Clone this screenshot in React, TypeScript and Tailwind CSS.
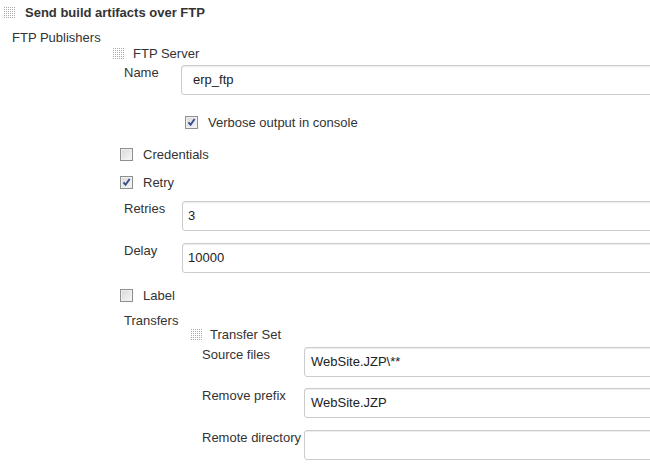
import React from "react";

function Grip() {
  const dots: React.ReactNode[] = [];
  for (let y = 0; y < 11; y += 2) {
    for (let x = 0; x < 11; x += 2) {
      dots.push(<rect key={`${x}-${y}`} x={x} y={y} width="1" height="1" fill="#aaaaaa" />);
    }
  }
  return (
    <svg width="11" height="11" viewBox="0 0 11 11" className="shrink-0">
      {dots}
    </svg>
  );
}

function Checkbox({ checked }: { checked?: boolean }) {
  return (
    <div className="relative h-[13px] w-[13px] shrink-0 border border-[#8e8f8f] bg-gradient-to-br from-[#d8d8d8] to-[#f7f7f7] shadow-[inset_0_0_0_1px_#f0f0f0]">
      {checked && (
        <svg width="11" height="11" viewBox="0 0 11 11" className="absolute left-0 top-0">
          <path d="M2.5 5.3 L4.6 7.8 L8.6 2" stroke="#3a4c8a" strokeWidth="1.9" fill="none" />
        </svg>
      )}
    </div>
  );
}

function CheckRow({ label, checked, className }: { label: string; checked?: boolean; className: string }) {
  return (
    <div className={`flex h-[13px] items-center ${className}`}>
      <Checkbox checked={checked} />
      <span className="ml-[10px] leading-[15px]">{label}</span>
    </div>
  );
}

function Field({
  label,
  value,
  labelWidth,
  pad = "pl-[6px]",
  className,
}: {
  label: string;
  value: string;
  labelWidth: string;
  pad?: string;
  className: string;
}) {
  return (
    <div className={`flex ${className}`}>
      <div className={`${labelWidth} shrink-0 pl-[11px] leading-[15px] whitespace-nowrap`}>{label}</div>
      <div
        className={`flex h-[30px] flex-1 items-center rounded-[3px] border border-[#cccccc] bg-white ${pad} text-[#222] shadow-[inset_0_1px_1px_rgba(0,0,0,0.075)]`}
      >
        {value}
      </div>
    </div>
  );
}

export default function App() {
  return (
    <div
      className="h-[467px] w-[650px] overflow-hidden bg-white text-[13px] text-[#333333]"
      style={{ fontFamily: '"Liberation Sans", Arial, sans-serif' }}
    >
      <div className="w-[700px]">
        <div className="mt-[5px] flex h-[15px] items-center pl-[4px]">
          <Grip />
          <span className="ml-[10px] font-bold leading-[15px]">Send build artifacts over FTP</span>
        </div>

        <div className="mt-[10px] pl-[12px] leading-[15px]">FTP Publishers</div>

        <div className="pl-[113px]">
          <div className="mt-[1px] flex h-[15px] items-center">
            <Grip />
            <span className="ml-[9px] leading-[15px]">FTP Server</span>
          </div>

          <Field label="Name" value="erp_ftp" labelWidth="w-[68px]" pad="pl-[11px]" className="mt-[4px]" />

          <CheckRow label="Verbose output in console" checked className="mt-[21px] ml-[72px]" />
          <CheckRow label="Credentials" className="mt-[19px] ml-[7px]" />
          <CheckRow label="Retry" checked className="mt-[15px] ml-[7px]" />

          <Field label="Retries" value="3" labelWidth="w-[69px]" pad="pl-[5px]" className="mt-[12px]" />
          <Field label="Delay" value="10000" labelWidth="w-[69px]" pad="pl-[5px]" className="mt-[12px]" />

          <CheckRow label="Label" className="mt-[16px] ml-[7px]" />

          <div className="mt-[11px] pl-[11px] leading-[15px]">Transfers</div>

          <div className="pl-[78px]">
            <div className="-mt-[1px] flex h-[15px] items-center">
              <Grip />
              <span className="ml-[8px] leading-[15px]">Transfer Set</span>
            </div>

            <Field label="Source files" value="WebSite.JZP\**" labelWidth="w-[113px]" className="mt-[5px]" />
            <Field label="Remove prefix" value="WebSite.JZP" labelWidth="w-[113px]" className="mt-[11px]" />
            <Field label="Remote directory" value="" labelWidth="w-[113px]" className="mt-[12px]" />
          </div>
        </div>
      </div>
    </div>
  );
}
